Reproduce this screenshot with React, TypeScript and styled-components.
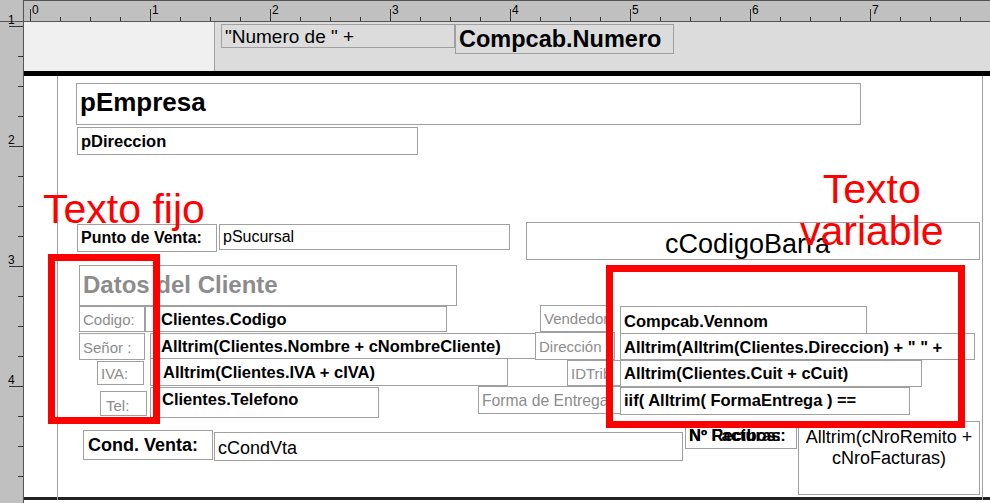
import React from "react";
import styled, { createGlobalStyle } from "styled-components";

const G = createGlobalStyle`
  html,body{margin:0;padding:0;background:#fff;}
  body{font-family:"Liberation Sans",Arial,sans-serif;overflow:hidden;}
`;

const Frame = styled.div`
  width:990px;height:503px;position:relative;overflow:hidden;background:#fff;
  display:grid;grid-template-columns:24px 1fr;grid-template-rows:22px 1fr;
`;
const Corner = styled.div`background:#c0c0c0;border-right:1px solid #555;border-bottom:1px solid #555;`;
const TopRuler = styled.div`background:#c0c0c0;border-bottom:1px solid #555;border-top:1px solid #555;position:relative;`;
const LeftRuler = styled.div`background:#c0c0c0;border-right:1px solid #555;position:relative;`;
const Tick = styled.span`position:absolute;background:#333;`;
const RLabel = styled.span`position:absolute;font-size:12px;color:#000;line-height:12px;`;

const Canvas = styled.div`position:relative;background:#fff;`;
const HeaderBand = styled.div`
  height:49px;background:#dcdcdc;display:grid;grid-template-columns:191px 1fr;
  border-bottom:5px solid #000;
`;
const HeaderLeft = styled.div`background:#f0f0f0;border-right:1px solid #a0a0a0;`;
const Body = styled.div`
  position:absolute;left:0;right:0;top:54px;bottom:3px;
  border-bottom:3px solid #222;
`;
const MarginLine = styled.div<{ $x: number }>`
  position:absolute;top:54px;bottom:3px;left:${p => p.$x}px;width:1px;background:#a0a0a0;
`;

type FP = { $x: number; $y: number; $w: number; $h: number; $size?: number; $bold?: boolean; $gray?: boolean; $bg?: string; $center?: boolean; $pl?: number; $pt?: number; $wrap?: boolean };
const Field = styled.div<FP>`
  position:absolute;left:${p => p.$x - 24}px;top:${p => p.$y - 22}px;
  width:${p => p.$w}px;height:${p => p.$h}px;box-sizing:border-box;
  border:1px solid #a0a0a0;background:${p => p.$bg || "#fff"};
  font-size:${p => p.$size || 16.5}px;font-weight:${p => (p.$bold ? 700 : 400)};
  color:${p => (p.$gray ? "#8c8c8c" : "#000")};
  padding:${p => p.$pt ?? 2}px 3px 0 ${p => p.$pl ?? 3}px;
  white-space:${p => (p.$wrap ? "normal" : "nowrap")};overflow:hidden;line-height:1.15;
  text-align:${p => (p.$center ? "center" : "left")};
`;
const Overlay = styled.span`position:absolute;left:3px;top:3px;`;

const RedBox = styled.div<{ $x: number; $y: number; $w: number; $h: number }>`
  position:absolute;left:${p => p.$x - 24}px;top:${p => p.$y - 22}px;width:${p => p.$w}px;height:${p => p.$h}px;
  box-sizing:border-box;border:7px solid #ff0000;
`;
const RedText = styled.div<{ $x: number; $y: number }>`
  position:absolute;left:${p => p.$x - 24}px;top:${p => p.$y - 22}px;color:#ff0000;font-size:41px;line-height:42px;
  text-align:center;
`;

export default function App() {
  const topTicks = [];
  for (let i = 0; i <= 32; i++) {
    const x = 6 + i * 30;
    const major = i % 4 === 0;
    topTicks.push(<Tick key={i} style={{ left: x, bottom: 0, width: 1, height: major ? 12 : 4 }} />);
    if (major && i < 32) topTicks.push(<RLabel key={"l" + i} style={{ left: x + 2, top: 3 }}>{i / 4}</RLabel>);
  }
  const leftTicks = [];
  for (let i = 0; i <= 16; i++) {
    const y = 26 + i * 30 - 22;
    const major = i % 4 === 0;
    leftTicks.push(<Tick key={i} style={{ right: 0, top: y, height: 1, width: major ? 14 : 5 }} />);
    if (major && i < 16) leftTicks.push(<RLabel key={"l" + i} style={{ left: 8, top: y - 12 }}>{i / 4 + 1}</RLabel>);
  }
  return (
    <>
      <G />
      <Frame>
        <Corner />
        <TopRuler>{topTicks}</TopRuler>
        <LeftRuler>{leftTicks}</LeftRuler>
        <Canvas>
          <HeaderBand><HeaderLeft /><div /></HeaderBand>
          <Body />
          <MarginLine $x={33} />
          <MarginLine $x={958} />
          <Field $x={221} $y={24} $w={234} $h={24} $size={19} $bg="#dcdcdc" $pt={1}>"Numero de " +</Field>
          <Field $x={455} $y={24} $w={219} $h={30} $size={23.5} $bold $bg="#dcdcdc" $pt={1}>Compcab.Numero</Field>
          <Field $x={76} $y={83} $w={785} $h={42} $size={26} $bold $pt={4}>pEmpresa</Field>
          <Field $x={77} $y={127} $w={341} $h={28} $bold $pt={4}>pDireccion</Field>
          <Field $x={77} $y={224} $w={140} $h={28} $size={16} $bold $pt={4}>Punto de Venta:</Field>
          <Field $x={219} $y={224} $w={291} $h={26} $size={16} $pt={3}>pSucursal</Field>
          <Field $x={526} $y={222} $w={454} $h={38} $size={27} $pl={138} $pt={6}>cCodigoBarra</Field>
          <Field $x={79} $y={265} $w={378} $h={41} $size={24} $bold $gray $pt={5}>Datos del Cliente</Field>
          <Field $x={79} $y={306} $w={66} $h={26} $size={15} $gray $pt={4}>Codigo:</Field>
          <Field $x={145} $y={306} $w={302} $h={26} $bold $pl={15} $pt={3}>Clientes.Codigo</Field>
          <Field $x={79} $y={333} $w={66} $h={27} $size={15} $gray $pt={5}>Señor :</Field>
          <Field $x={150} $y={333} $w={387} $h={26} $bold $pl={10} $pt={3}>Alltrim(Clientes.Nombre + cNombreCliente)</Field>
          <Field $x={97} $y={361} $w={47} $h={24} $size={15} $gray $pt={3}>IVA:</Field>
          <Field $x={150} $y={358} $w={358} $h={28} $bold $pl={12} $pt={4}>Alltrim(Clientes.IVA + cIVA)</Field>
          <Field $x={100} $y={391} $w={47} $h={25} $size={15} $gray $pl={5} $pt={5}>Tel:</Field>
          <Field $x={150} $y={387} $w={229} $h={31} $bold $pl={11} $pt={2}>Clientes.Telefono</Field>
          <Field $x={83} $y={430} $w={130} $h={30} $size={18} $bold $pl={4} $pt={4}>Cond. Venta:</Field>
          <Field $x={214} $y={432} $w={469} $h={29} $size={18} $pt={5}>cCondVta</Field>
          <Field $x={540} $y={305} $w={72} $h={27} $size={15} $gray $pt={4}>Vendedor</Field>
          <Field $x={620} $y={306} $w={247} $h={28} $bold $pt={5}>Compcab.Vennom</Field>
          <Field $x={535} $y={332} $w={80} $h={28} $size={15} $gray $pt={5}>Dirección</Field>
          <Field $x={620} $y={333} $w={355} $h={27} $bold $pt={4}>Alltrim(Alltrim(Clientes.Direccion) + " " +</Field>
          <Field $x={567} $y={360} $w={55} $h={26} $size={15} $gray $pt={4}>IDTrib</Field>
          <Field $x={620} $y={360} $w={302} $h={27} $bold $pt={3}>Alltrim(Clientes.Cuit + cCuit)</Field>
          <Field $x={478} $y={386} $w={143} $h={28} $size={15.7} $gray $pt={5}>Forma de Entrega</Field>
          <Field $x={620} $y={387} $w={290} $h={28} $bold $pt={3}>iif( Alltrim( FormaEntrega ) ==</Field>
          <Field $x={685} $y={422} $w={112} $h={27} $bold>
            <Overlay>Nº Recibos:</Overlay><Overlay>Nº Facturas:</Overlay>
          </Field>
          <Field $x={798} $y={421} $w={182} $h={74} $size={18} $center $wrap $pt={5}>
            Alltrim(cNroRemito +<br />cNroFacturas)
          </Field>
          <RedText $x={43} $y={188}>Texto fijo</RedText>
          <RedText $x={800} $y={168}>Texto<br />variable</RedText>
          <RedBox $x={48} $y={254} $w={112} $h={170} />
          <RedBox $x={606} $y={265} $w={359} $h={163} />
        </Canvas>
      </Frame>
    </>
  );
}
